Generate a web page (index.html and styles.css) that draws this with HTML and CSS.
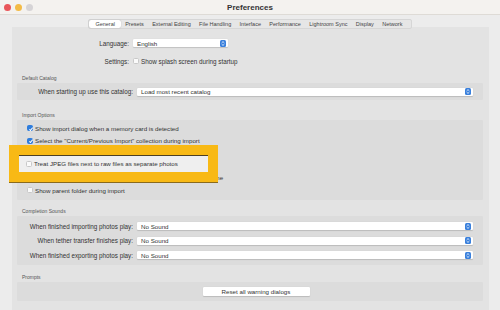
FILE: index.html
```html
<!DOCTYPE html>
<html lang="en">
<head>
    <meta charset="UTF-8">
    <title>Preferences</title>
    <link rel="stylesheet" href="styles.css">
</head>
<body>
<div class="window">

    <!-- Barre de titre -->
    <div class="titlebar">
        <div class="lights">
            <span class="light red"></span>
            <span class="light yellow"></span>
            <span class="light grey"></span>
        </div>
        <div class="title">Preferences</div>
    </div>

    <!-- Onglets -->
    <div class="tabs">
        <span class="tab active">General</span>
        <span class="tab">Presets</span>
        <span class="tab">External Editing</span>
        <span class="tab">File Handling</span>
        <span class="tab">Interface</span>
        <span class="tab">Performance</span>
        <span class="tab">Lightroom Sync</span>
        <span class="tab">Display</span>
        <span class="tab">Network</span>
    </div>

    <div class="panel">
        <div class="row top-row">
            <span class="label">Language:</span>
            <div class="select short">English<svg class="stepper" viewBox="0 0 6 7"><rect width="6" height="7" rx="1.5" fill="#3a80dc"/><path d="M1.7 2.8 L3 1.6 L4.3 2.8 M1.7 4.2 L3 5.4 L4.3 4.2" stroke="#fff" stroke-width="0.8" fill="none"/></svg></div>
        </div>
        <div class="row top-row settings">
            <span class="label">Settings:</span>
            <span class="check"></span>
            <span class="text">Show splash screen during startup</span>
        </div>

        <div class="section-title catalog-title">Default Catalog</div>
        <div class="group catalog">
            <div class="row">
                <span class="label">When starting up use this catalog:</span>
                <div class="select">Load most recent catalog<svg class="stepper" viewBox="0 0 6 7"><rect width="6" height="7" rx="1.5" fill="#3a80dc"/><path d="M1.7 2.8 L3 1.6 L4.3 2.8 M1.7 4.2 L3 5.4 L4.3 4.2" stroke="#fff" stroke-width="0.8" fill="none"/></svg></div>
            </div>
        </div>

        <div class="section-title import-title">Import Options</div>
        <div class="group import">
            <div class="opt"><span class="check on"></span>Show import dialog when a memory card is detected</div>
            <div class="opt"><span class="check on"></span>Select the "Current/Previous Import" collection during import</div>
            <div class="opt covered"><span class="check"></span>Ignore camera-generated folder names when naming folders</div>
            <div class="opt covered"><span class="check"></span>Treat JPEG files next to raw files as separate photos</div>
            <div class="opt"><span class="check"></span>Replace embedded previews with standard previews during idle time</div>
            <div class="opt"><span class="check"></span>Show parent folder during import</div>
        </div>

        <div class="section-title sounds-title">Completion Sounds</div>
        <div class="group sounds">
            <div class="row">
                <span class="label">When finished importing photos play:</span>
                <div class="select">No Sound<svg class="stepper" viewBox="0 0 6 7"><rect width="6" height="7" rx="1.5" fill="#3a80dc"/><path d="M1.7 2.8 L3 1.6 L4.3 2.8 M1.7 4.2 L3 5.4 L4.3 4.2" stroke="#fff" stroke-width="0.8" fill="none"/></svg></div>
            </div>
            <div class="row">
                <span class="label">When tether transfer finishes play:</span>
                <div class="select">No Sound<svg class="stepper" viewBox="0 0 6 7"><rect width="6" height="7" rx="1.5" fill="#3a80dc"/><path d="M1.7 2.8 L3 1.6 L4.3 2.8 M1.7 4.2 L3 5.4 L4.3 4.2" stroke="#fff" stroke-width="0.8" fill="none"/></svg></div>
            </div>
            <div class="row">
                <span class="label">When finished exporting photos play:</span>
                <div class="select">No Sound<svg class="stepper" viewBox="0 0 6 7"><rect width="6" height="7" rx="1.5" fill="#3a80dc"/><path d="M1.7 2.8 L3 1.6 L4.3 2.8 M1.7 4.2 L3 5.4 L4.3 4.2" stroke="#fff" stroke-width="0.8" fill="none"/></svg></div>
            </div>
        </div>

        <div class="section-title prompts-title">Prompts</div>
        <div class="group prompts">
            <span class="button">Reset all warning dialogs</span>
        </div>
    </div>

    <!-- Encadré jaune -->
    <div class="callout">
        <div class="callout-inner"><span class="check"></span>Treat JPEG files next to raw files as separate photos</div>
    </div>
</div>
</body>
</html>
```

FILE: styles.css
```css
* {
    box-sizing: border-box;
}

body {
    margin: 0;
    width: 500px;
    height: 310px;
    overflow: hidden;
    font-family: "Liberation Sans", Arial, sans-serif;
    color: #2e2e2e;
    background-color: #ececec;
}

.window {
    position: relative;
    height: 310px;
    overflow: hidden;
}

.titlebar {
    height: 15px;
    background-color: #f4f2ef;
    border-bottom: 1px solid #dedbd6;
    display: flex;
    align-items: center;
    justify-content: center;
    position: relative;
}

.lights {
    position: absolute;
    left: 4px;
    top: 4px;
    display: flex;
    gap: 4px;
}

.light {
    width: 7px;
    height: 7px;
    border-radius: 50%;
}

.red { background-color: #e9565a; }
.yellow { background-color: #f3bb46; }
.grey { background-color: #d6d4d6; }

.title {
    font-size: 8px;
    font-weight: bold;
    color: #333;
}

.tabs {
    display: flex;
    align-items: center;
    width: max-content;
    margin: 4px auto 0;
    height: 10px;
    padding: 0 4px 0 0;
    background-color: #e6e6e6;
    border: 1px solid #d6d6d6;
    border-radius: 2px;
    position: relative;
    z-index: 1;
}

.tab {
    font-size: 5.5px;
    color: #444;
    padding: 0 4.2px;
    line-height: 8px;
}

.tab.active {
    background-color: #fff;
    padding: 0 6px;
    border-radius: 2px;
    box-shadow: 0 0 1px rgba(0, 0, 0, 0.3);
}

.panel {
    margin: -2px 11px 0 12px;
    background-color: #e3e3e3;
    padding-top: 11px;
    height: 300px;
}

.row {
    display: flex;
    align-items: center;
    font-size: 6.3px;
}

.top-row {
    height: 10px;
}

.settings {
    margin-top: 8px;
}

.label {
    width: 121px;
    text-align: right;
    padding-right: 4px;
    flex-shrink: 0;
    color: #333;
}

.group .label {
    width: 120px;
}

.select {
    flex: 1;
    height: 8px;
    background-color: #fff;
    border-radius: 1px;
    box-shadow: 0 0.5px 1px rgba(0, 0, 0, 0.15);
    display: flex;
    align-items: center;
    justify-content: space-between;
    padding: 0 2px 0 4px;
    font-size: 6.2px;
    color: #333;
}

.select.short {
    flex: none;
    width: 95px;
}

.stepper {
    width: 6px;
    height: 7px;
}

.check {
    display: inline-block;
    width: 6px;
    height: 6px;
    background-color: #fafafa;
    border: 0.5px solid #c8c8c8;
    border-radius: 1.5px;
    margin-right: 2px;
    flex-shrink: 0;
    position: relative;
}

.check.on {
    background-color: #2f7ddc;
    border-color: #2f7ddc;
}

.check.on::after {
    content: "";
    position: absolute;
    left: 1.6px;
    top: 0.4px;
    width: 1.4px;
    height: 3px;
    border: solid #fff;
    border-width: 0 0.8px 0.8px 0;
    transform: rotate(40deg);
}

.text {
    color: #333;
}

.section-title {
    font-size: 5px;
    line-height: 6px;
    height: 6px;
    color: #555;
    padding-left: 10px;
    margin-bottom: 2px;
}

.catalog-title { margin-top: 9px; }
.import-title { margin-top: 12px; }
.sounds-title { margin-top: 8px; }
.prompts-title { margin-top: 9px; }

.group {
    margin: 0 6px 0 5px;
    background-color: #dcdcdc;
    border-radius: 1px;
}

.catalog {
    height: 17px;
    padding: 0 10px 0 0;
    display: flex;
    flex-direction: column;
    justify-content: center;
}

.import {
    padding: 2px 0 3.5px 10px;
}

.opt {
    height: 12.4px;
    display: flex;
    align-items: center;
    font-size: 6.2px;
    color: #333;
}

/* rangées cachées sous l'encadré */
.opt.covered {
    visibility: hidden;
}

.sounds {
    padding: 3px 10px 2.5px 0;
}

.sounds .row {
    height: 14.5px;
}

.prompts {
    height: 19px;
    display: flex;
    align-items: center;
    justify-content: center;
}

.button {
    width: 107px;
    height: 9px;
    background-color: #fff;
    border-radius: 1px;
    box-shadow: 0 0.5px 1px rgba(0, 0, 0, 0.15);
    font-size: 6.2px;
    text-align: center;
    line-height: 9px;
    color: #333;
    margin-left: 12px;
}

.callout {
    position: absolute;
    left: 9px;
    top: 145px;
    width: 209px;
    height: 38px;
    background-color: #f8b915;
    border-bottom: 1px solid #8a6a1c;
    padding: 9.5px 0 0 10px;
}

.callout-inner {
    width: 189px;
    height: 17.5px;
    background-color: #efefef;
    border-top: 1px solid #4d3f22;
    display: flex;
    align-items: center;
    padding-left: 7px;
    font-size: 6.2px;
    color: #333;
}
```
